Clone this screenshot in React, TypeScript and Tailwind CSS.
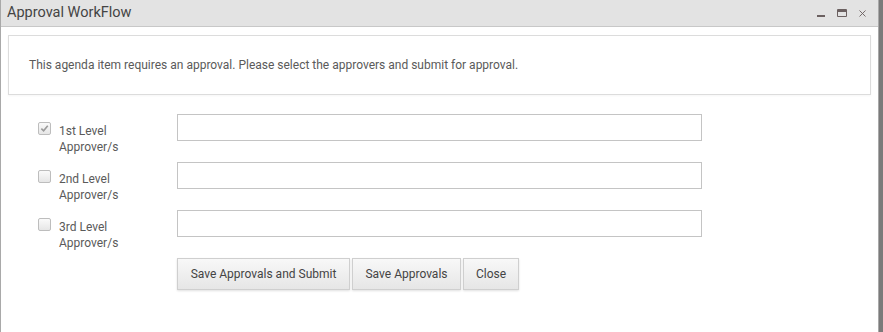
import { X } from 'lucide-react';

const levels = [
  { label: '1st Level', checked: true },
  { label: '2nd Level', checked: false },
  { label: '3rd Level', checked: false },
];

const buttonClass =
  'h-[32px] border border-[#cfcfcf] bg-[linear-gradient(#f8f8f8,#e6e6e6)] text-[12px] text-[#444] shadow-[0_1px_2px_rgba(0,0,0,0.12)]';

const App = () => {
  return (
    <div className="flex h-[332px] w-[883px] bg-[#7a7a7a] font-['Roboto',sans-serif] text-[#555]">
      <div className="flex w-[879px] flex-col border-l border-r border-[#a9a9a9] bg-white">
        {/* Title bar */}
        <div className="flex h-[27px] items-center justify-between border-b border-[#c8c8c8] bg-[#e3e3e3] pl-[6px] pr-[10px]">
          <span className="text-[14.5px] text-[#444]">Approval WorkFlow</span>
          <div className="flex items-center text-[#6b6060]">
            <div className="mt-[6px] h-[2px] w-[8px] bg-[#6b6060]" />
            <div className="ml-[12px] h-[8px] w-[10px] rounded-[1px] border border-[#6b6060] border-t-[3px]" />
            <X className="ml-[10px] h-[11px] w-[11px]" strokeWidth={2} />
          </div>
        </div>

        {/* Info box */}
        <div className="mx-[7px] mt-[8px] flex h-[60px] items-center border border-[#dcdcdc] px-[20px] shadow-[0_1px_2px_rgba(0,0,0,0.04)]">
          <p className="text-[12px] text-[#5a5a5a]">
            This agenda item requires an approval. Please select the approvers and submit for approval.
          </p>
        </div>

        {/* Approver rows */}
        <div className="mt-[19px] flex flex-col gap-[7px] pl-[37px]">
          {levels.map((level) => (
            <div key={level.label} className="flex items-start">
              <div className="mt-[8px] flex h-[13px] w-[13px] items-center justify-center rounded-[2px] border border-[#bdbdbd] bg-[linear-gradient(#fafafa,#e6e6e6)]">
                {level.checked && (
                  <svg viewBox="0 0 10 10" className="h-[9px] w-[9px]">
                    <path d="M1.5 5.2 L4 7.6 L8.6 2" fill="none" stroke="#9a9a9a" strokeWidth="1.8" />
                  </svg>
                )}
              </div>
              <div className="ml-[8px] w-[118px] pt-[9px] text-[12px] leading-[16px] text-[#5a5a5a]">
                <div>{level.label}</div>
                <div>Approver/s</div>
              </div>
              <input
                type="text"
                className="h-[27px] w-[525px] border border-[#c4c4c4] bg-white outline-none"
              />
            </div>
          ))}
        </div>

        {/* Buttons */}
        <div className="mt-[7px] flex gap-[2px] pl-[176px]">
          <button className={`${buttonClass} w-[173px]`}>Save Approvals and Submit</button>
          <button className={`${buttonClass} w-[109px]`}>Save Approvals</button>
          <button className={`${buttonClass} w-[56px]`}>Close</button>
        </div>
      </div>
    </div>
  );
};

export default App;
